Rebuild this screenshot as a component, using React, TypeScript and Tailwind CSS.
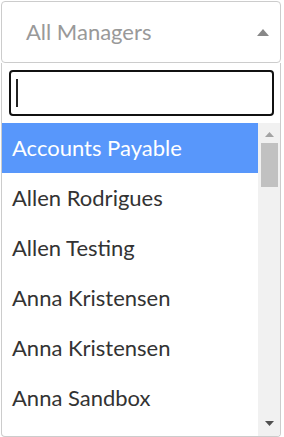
import React from "react";

const items = [
  "Accounts Payable",
  "Allen Rodrigues",
  "Allen Testing",
  "Anna Kristensen",
  "Anna Kristensen",
  "Anna Sandbox",
];

export default function App() {
  return (
    <div className="w-[284px] h-[437px] bg-white overflow-hidden font-['Lato','Liberation_Sans',sans-serif] flex flex-col">
      <div className="ml-[1px] mt-[1px] w-[280px] h-[62px] shrink-0 border border-[#cccccc] rounded-[4px] flex items-center justify-between pl-[24px] pr-[11px]">
        <span className="text-[22px] text-[#999999] leading-none">All Managers</span>
        <svg width="12" height="7" viewBox="0 0 12 7">
          <polygon points="0,7 6,0 12,7" fill="#888888" />
        </svg>
      </div>
      <div className="ml-[1px] w-[280px] h-[374px] shrink-0 border border-t-0 border-[#cccccc] rounded-b-[4px] flex flex-col overflow-hidden">
        <div className="pl-[7px] pt-[7px] pb-[7px]">
          <div className="w-[265px] h-[46px] border-2 border-[#111111] rounded-[4px] flex items-center pl-[5px]">
            <div className="w-[2px] h-[28px] bg-[#222222]" />
          </div>
        </div>
        <div className="flex flex-1 min-h-0">
          <div className="w-[256px] flex flex-col">
            {items.map((name, i) => (
              <div
                key={i}
                className={
                  i === 0
                    ? "h-[50px] shrink-0 flex items-center pl-[10px] text-[22px] leading-none bg-[#5897fb] text-white"
                    : "h-[50px] shrink-0 flex items-center pl-[10px] text-[22px] leading-none text-[#333333]"
                }
              >
                {name}
              </div>
            ))}
          </div>
          <div className="w-[22px] bg-[#f1f1f1] flex flex-col items-center">
            <svg className="mt-[9px]" width="9" height="5" viewBox="0 0 9 5">
              <polygon points="0,5 4.5,0 9,5" fill="#a3a3a3" />
            </svg>
            <div className="mt-[6px] w-[17px] h-[44px] bg-[#c1c1c1]" />
            <div className="flex-1" />
            <svg className="mb-[10px]" width="9" height="5" viewBox="0 0 9 5">
              <polygon points="0,0 9,0 4.5,5" fill="#505050" />
            </svg>
          </div>
        </div>
      </div>
    </div>
  );
}
